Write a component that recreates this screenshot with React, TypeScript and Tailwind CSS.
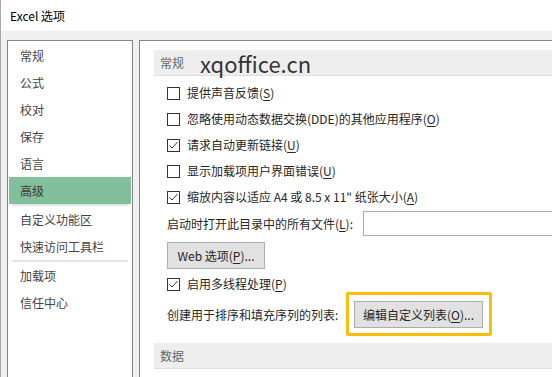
import React from "react";

const FONT = { fontFamily: '"Noto Sans CJK SC", "Noto Sans", sans-serif' };

const navGroups: string[][] = [
  ["常规", "公式", "校对", "保存", "语言", "高级"],
  ["自定义功能区", "快速访问工具栏"],
  ["加载项", "信任中心"],
];

function Label({ text, hot, tail }: { text: string; hot: string; tail?: string }) {
  return (
    <span>
      {text}(<span className="underline underline-offset-2">{hot}</span>){tail}
    </span>
  );
}

function CheckRow({ checked, children }: { checked?: boolean; children: React.ReactNode }) {
  return (
    <div className="flex h-[26px] items-center">
      <span className="flex h-[13px] w-[13px] shrink-0 items-center justify-center border border-[#333333] bg-white">
        {checked && (
          <svg width="11" height="11" viewBox="0 0 11 11" fill="none">
            <polyline points="1.5,5.5 4,8 9.5,2" stroke="#333333" strokeWidth="1" />
          </svg>
        )}
      </span>
      <span className="ml-[7px] text-[12px] text-[#262626]">{children}</span>
    </div>
  );
}

function SectionHeader({ title, children }: { title: string; children?: React.ReactNode }) {
  return (
    <div className="flex h-[26px] items-center border-b border-[#dedede] bg-[#eeeeee] pl-[6px]">
      <span className="text-[12px] text-[#666666]">{title}</span>
      {children}
    </div>
  );
}

export default function App() {
  return (
    <div
      style={FONT}
      className="flex h-[377px] w-[552px] flex-col overflow-hidden border-l border-[#a8a8a8] bg-white"
    >
      {/* title bar */}
      <div className="flex h-[31px] shrink-0 items-center bg-white pl-[9px] text-[12px] text-black">
        Excel 选项
      </div>

      <div className="flex flex-1 gap-[6px] bg-[#f0f0f0] pl-[6px] pt-[9px]">
        {/* left nav */}
        <div className="h-[400px] w-[126px] shrink-0 border border-[#848484] bg-white pt-px">
          {navGroups.map((group, gi) => (
            <div key={gi}>
              {gi > 0 && <div className="mx-[4px] h-[2px] bg-[#e3e3e3]" />}
              {group.map((item) => (
                <div
                  key={item}
                  className={`mx-px flex h-[27px] items-center pl-[11px] text-[12px] ${
                    item === "高级" ? "bg-[#83bf9b] text-[#3a3a3a]" : "text-[#444444]"
                  }`}
                >
                  {item}
                </div>
              ))}
            </div>
          ))}
        </div>

        {/* right content */}
        <div className="h-[400px] w-[440px] shrink-0 border-l border-t border-[#848484] bg-white pl-[14px] pt-[9px]">
          <SectionHeader title="常规">
            <span className="ml-[16px] text-[22px] leading-none text-[#333333]">xqoffice.cn</span>
          </SectionHeader>

          <div className="mt-[4px] pl-[13px]">
            <CheckRow>
              <Label text="提供声音反馈" hot="S" />
            </CheckRow>
            <CheckRow>
              <Label text="忽略使用动态数据交换(DDE)的其他应用程序" hot="O" />
            </CheckRow>
            <CheckRow checked>
              <Label text="请求自动更新链接" hot="U" />
            </CheckRow>
            <CheckRow>
              <Label text="显示加载项用户界面错误" hot="U" />
            </CheckRow>
            <CheckRow checked>
              <Label text="缩放内容以适应 A4 或 8.5 x 11&quot; 纸张大小" hot="A" />
            </CheckRow>

            <div className="mt-px flex h-[25px] items-center">
              <span className="w-[196px] shrink-0 text-[12px] text-[#262626]">
                <Label text="启动时打开此目录中的所有文件" hot="L" tail=":" />
              </span>
              <div className="h-[25px] w-[220px] shrink-0 border border-[#ababab] bg-white" />
            </div>

            <button className="mt-[6px] flex h-[27px] w-[98px] items-center justify-center border border-[#adadad] bg-[#e1e1e1] text-[12px] text-[#262626]">
              <Label text="Web 选项" hot="P" tail="..." />
            </button>

            <div className="mt-[2px]">
              <CheckRow checked>
                <Label text="启用多线程处理" hot="P" />
              </CheckRow>
            </div>

            <div className="mt-[4px] flex h-[27px] items-center">
              <span className="w-[187px] shrink-0 text-[12px] text-[#262626]">创建用于排序和填充序列的列表:</span>
              <div className="relative">
                <button className="flex h-[27px] w-[129px] items-center justify-center border border-[#adadad] bg-[#e1e1e1] text-[12px] text-[#262626]">
                  <Label text="编辑自定义列表" hot="O" tail="..." />
                </button>
                <span className="pointer-events-none absolute -bottom-[8px] -left-[8px] -right-[9px] -top-[9px] rounded-[2px] border-[3px] border-[#fbbd0a]" />
              </div>
            </div>
          </div>

          <div className="mt-[15px]">
            <SectionHeader title="数据" />
          </div>
        </div>
      </div>
    </div>
  );
}
